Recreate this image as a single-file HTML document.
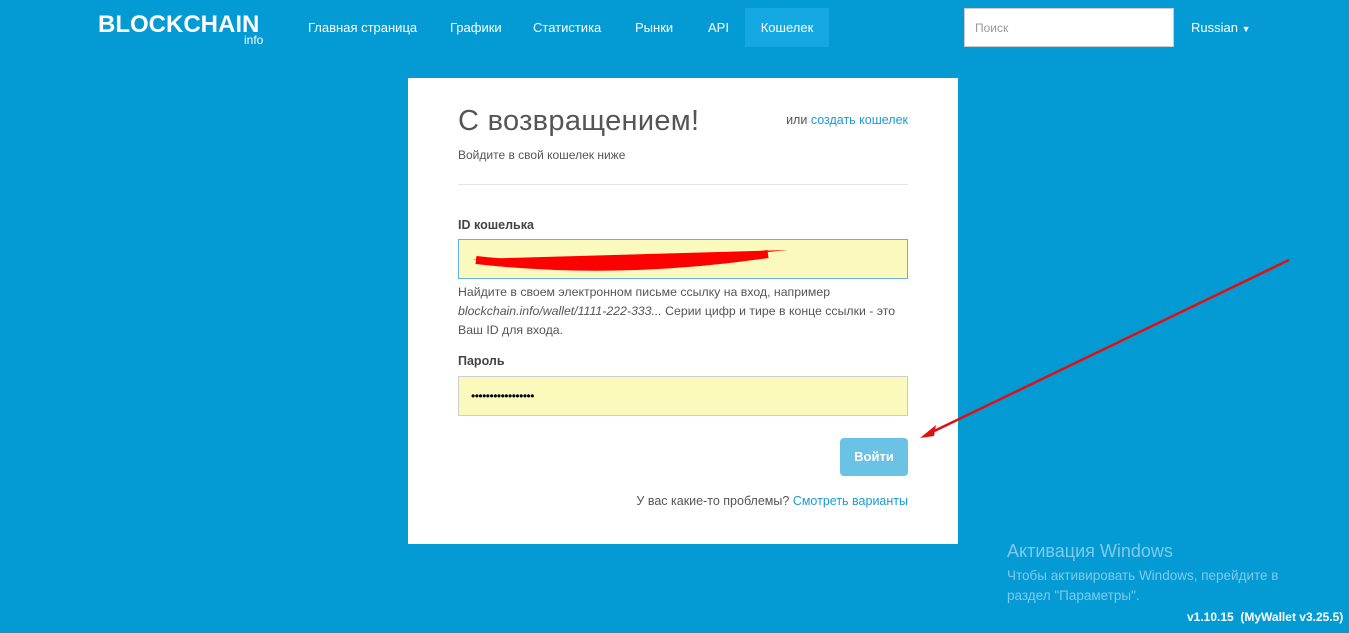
<!DOCTYPE html>
<html><head><meta charset="utf-8"><style>
*{box-sizing:border-box;margin:0;padding:0}
body{width:1349px;height:633px;background:#049bd4;font-family:"Liberation Sans","DejaVu Sans",sans-serif;position:relative;overflow:hidden}
.a{position:absolute}
.logo{left:98px;top:11px;color:#fff;font-weight:bold;font-size:24px;letter-spacing:0px}
.info{left:244px;top:33px;color:#fff;font-size:12px}
.nav{top:0;height:47px;line-height:55px;color:#fff;font-size:13px}
.card{left:408px;top:78px;width:550px;height:466px;background:#fff}
.lbl{font-size:12.5px;font-weight:bold;color:#444}
.inp{left:50px;width:450px;height:40px;background:#fafabd;border:1px solid #ccc}
.help{font-size:12.3px;color:#555;line-height:19px}
a{color:#1d9ad6;text-decoration:none}
</style></head><body>
<div class="a logo">BLOCKCHAIN</div><div class="a info">info</div>
<div class="a nav" style="left:308px">Главная страница</div>
<div class="a nav" style="left:450px">Графики</div>
<div class="a nav" style="left:533px">Статистика</div>
<div class="a nav" style="left:635px">Рынки</div>
<div class="a nav" style="left:708px">API</div>
<div class="a" style="left:745px;top:8px;width:84px;height:39px;background:#14a8e3;color:#fff;font-size:13px;line-height:39px;text-align:center">Кошелек</div>
<div class="a" style="left:964px;top:8px;width:210px;height:39px;background:#fff;border:1px solid #ccc;color:#999;font-size:12px;line-height:38px;padding-left:10px">Поиск</div>
<div class="a" style="left:1191px;top:20px;color:#fff;font-size:13px">Russian <span style="font-size:9px">▼</span></div>
<div class="a card">
<div class="a" style="left:50px;top:27px;font-size:29px;color:#555;letter-spacing:0.3px">С возвращением!</div>
<div class="a" style="right:50px;top:35px;font-size:12.5px;color:#555">или <a>создать кошелек</a></div>
<div class="a" style="left:50px;top:70px;font-size:12px;color:#555">Войдите в свой кошелек ниже</div>
<div class="a" style="left:50px;top:106px;width:450px;border-top:1px solid #e5e5e5"></div>
<div class="a lbl" style="left:50px;top:140px">ID кошелька</div>
<div class="a inp" style="top:161px;border-color:#66afe9"></div>
<svg class="a" style="left:460px;top:168px;left:10px" width="0" height="0"></svg>
<svg class="a" style="left:60px;top:168px" width="320" height="30"><path d="M5 13 L320 4 L240 12 L300 9 L200 20 L120 24 L30 18 Z" fill="#f00"/><path d="M8 14 Q150 30 300 8" stroke="#f00" stroke-width="8" fill="none"/></svg>
<div class="a help" style="left:50px;top:205px;width:455px">Найдите в своем электронном письме ссылку на вход, например <i>blockchain.info/wallet/1111-222-333...</i> Серии цифр и тире в конце ссылки - это Ваш ID для входа.</div>
<div class="a lbl" style="left:50px;top:276px">Пароль</div>
<div class="a inp" style="top:298px;line-height:38px;padding-left:12px;font-size:12px;letter-spacing:-0.5px">•••••••••••••••••</div>
<div class="a" style="left:432px;top:360px;width:68px;height:38px;background:#6ac2e4;border-radius:4px;color:#fff;font-weight:bold;font-size:13px;line-height:38px;text-align:center">Войти</div>
<div class="a" style="right:50px;top:416px;font-size:12.5px;color:#555">У вас какие-то проблемы? <a>Смотреть варианты</a></div>
</div>
<svg class="a" style="left:0;top:0" width="1349" height="633"><line x1="1289" y1="260" x2="928" y2="434" stroke="#e01010" stroke-width="2.5"/><path d="M920 438 L936 425 L934 436 Z" fill="#e01010"/></svg>
<div class="a" style="left:1007px;top:541px;color:#7fcaea;font-size:18px">Активация Windows</div>
<div class="a" style="left:1007px;top:566px;color:#7fcaea;font-size:13.5px;line-height:20px">Чтобы активировать Windows, перейдите в<br>раздел "Параметры".</div>
<div class="a" style="left:1187px;top:610px;color:#fff;font-weight:bold;font-size:12px">v1.10.15 &nbsp;(MyWallet v3.25.5)</div>
</body></html>
